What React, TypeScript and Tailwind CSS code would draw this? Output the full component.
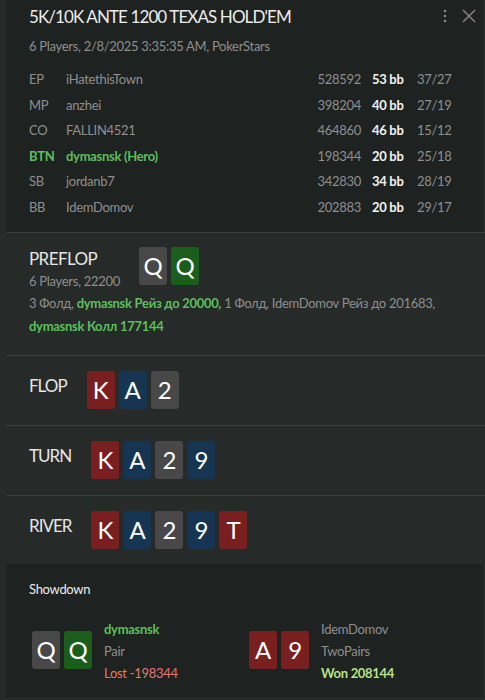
import React from "react";

type Card = { r: string; c: "gray" | "green" | "red" | "blue" };

const cardBg: Record<Card["c"], string> = {
  gray: "bg-[#484848]",
  green: "bg-[#1b5e1b]",
  red: "bg-[#7a1f1f]",
  blue: "bg-[#163552]",
};

const players = [
  { pos: "EP", name: "iHatethisTown", stack: "528592", bb: "53 bb", ratio: "37/27" },
  { pos: "MP", name: "anzhei", stack: "398204", bb: "40 bb", ratio: "27/19" },
  { pos: "CO", name: "FALLIN4521", stack: "464860", bb: "46 bb", ratio: "15/12" },
  { pos: "BTN", name: "dymasnsk (Hero)", stack: "198344", bb: "20 bb", ratio: "25/18", hero: true },
  { pos: "SB", name: "jordanb7", stack: "342830", bb: "34 bb", ratio: "28/19" },
  { pos: "BB", name: "IdemDomov", stack: "202883", bb: "20 bb", ratio: "29/17" },
];

const PlayingCard = ({ card }: { card: Card }) => (
  <div
    className={`${cardBg[card.c]} w-[28px] h-[38px] rounded-[3px] flex items-center justify-center text-white text-[24px] leading-none`}
  >
    {card.r}
  </div>
);

const Cards = ({ cards }: { cards: Card[] }) => (
  <div className="flex gap-[4px]">
    {cards.map((c, i) => (
      <PlayingCard key={i} card={c} />
    ))}
  </div>
);

const board: Card[] = [
  { r: "K", c: "red" },
  { r: "A", c: "blue" },
  { r: "2", c: "gray" },
  { r: "9", c: "blue" },
  { r: "T", c: "red" },
];

const Street = ({ label, n, last }: { label: string; n: number; last?: boolean }) => (
  <div
    className={`ml-[6px] border-t border-[#3b3f3d] pl-[23px] pt-[15px] flex items-start gap-[20px] ${last ? "pb-[15px]" : "pb-[16px]"}`}
  >
    <div className="text-[17px] leading-[20px] mt-[5px] tracking-[-1px] text-[#e6e6e6]">{label}</div>
    <Cards cards={board.slice(0, n)} />
  </div>
);

export default function App() {
  return (
    <div className="min-h-screen bg-[#262a28] font-['Lato','Noto_Sans',sans-serif] text-[13px] tracking-[-0.3px]">
      {/* header */}
      <div className="ml-[6px] mr-[2px] bg-[#1e2220] pl-[23px] pt-[6px] pb-[11px] relative">
        <div className="text-[17px] leading-[22px] tracking-[-0.9px] text-[#ececec]">5K/10K ANTE 1200 TEXAS HOLD'EM</div>
        <div className="mt-[9px] leading-[18px] text-[#8f8f8f]">6 Players, 2/8/2025 3:35:35 AM, PokerStars</div>
        <div className="absolute right-[6px] top-[8px] flex items-center gap-[14px] text-[#8a8a8a]">
          <svg width="4" height="14" viewBox="0 0 4 14" fill="currentColor">
            <circle cx="2" cy="2" r="1.3" />
            <circle cx="2" cy="7" r="1.3" />
            <circle cx="2" cy="12" r="1.3" />
          </svg>
          <svg width="16" height="16" viewBox="0 0 16 16" stroke="currentColor" strokeWidth="1.4">
            <path d="M2 2 L14 14 M14 2 L2 14" />
          </svg>
        </div>
        <div className="mt-[12px]">
          {players.map((p) => (
            <div key={p.pos} className="flex items-center h-[25.6px] whitespace-nowrap">
              <div className={`w-[37px] ${p.hero ? "text-[#5cbf5c] font-bold" : "text-[#8f8f8f]"}`}>{p.pos}</div>
              <div className={`flex-1 ${p.hero ? "text-[#5cbf5c] font-bold" : "text-[#8f8f8f]"}`}>{p.name}</div>
              <div className="w-[50px] text-right text-[#8f8f8f]">{p.stack}</div>
              <div className="w-[56px] pl-[11px] font-bold text-[#f2f2f2]">{p.bb}</div>
              <div className="w-[66px] text-[#8f8f8f]">{p.ratio}</div>
            </div>
          ))}
        </div>
      </div>

      {/* preflop */}
      <div className="ml-[6px] border-t border-[#3b3f3d] pl-[23px] pt-[14px] pb-[17px]">
        <div className="flex items-start gap-[19px]">
          <div>
            <div className="text-[17px] leading-[20px] mt-[2px] tracking-[-0.6px] text-[#e6e6e6]">PREFLOP</div>
            <div className="leading-[18px] mt-[3px] text-[#8f8f8f]">6 Players, 22200</div>
          </div>
          <Cards cards={[{ r: "Q", c: "gray" }, { r: "Q", c: "green" }]} />
        </div>
        <div className="mt-[2px] leading-[23px] text-[#8f8f8f]">
          3 Фолд, <span className="text-[#5cbf5c] font-bold">dymasnsk Рейз до 20000,</span> 1 Фолд, IdemDomov Рейз до 201683,
          <br />
          <span className="text-[#5cbf5c] font-bold">dymasnsk Колл 177144</span>
        </div>
      </div>

      <Street label="FLOP" n={3} />
      <Street label="TURN" n={4} />
      <Street label="RIVER" n={5} last />

      {/* showdown */}
      <div className="ml-[6px] mr-[2px] bg-[#1e2220] pl-[23px] pt-[15px] pb-[13px]">
        <div className="leading-[20px] text-[#ececec]">Showdown</div>
        <div className="mt-[18px] flex pl-[3px]">
          <div className="w-[217px] flex items-center gap-[12px]">
            <Cards cards={[{ r: "Q", c: "gray" }, { r: "Q", c: "green" }]} />
            <div className="leading-[22px] mt-[1px]">
              <div className="text-[#5cbf5c] font-bold">dymasnsk</div>
              <div className="text-[#8f8f8f]">Pair</div>
              <div className="text-[#e5786d]">Lost -198344</div>
            </div>
          </div>
          <div className="flex items-center gap-[12px]">
            <Cards cards={[{ r: "A", c: "red" }, { r: "9", c: "red" }]} />
            <div className="leading-[22px] mt-[1px]">
              <div className="text-[#8f8f8f]">IdemDomov</div>
              <div className="text-[#8f8f8f]">TwoPairs</div>
              <div className="text-[#b7e38a] font-bold">Won 208144</div>
            </div>
          </div>
        </div>
      </div>
    </div>
  );
}
